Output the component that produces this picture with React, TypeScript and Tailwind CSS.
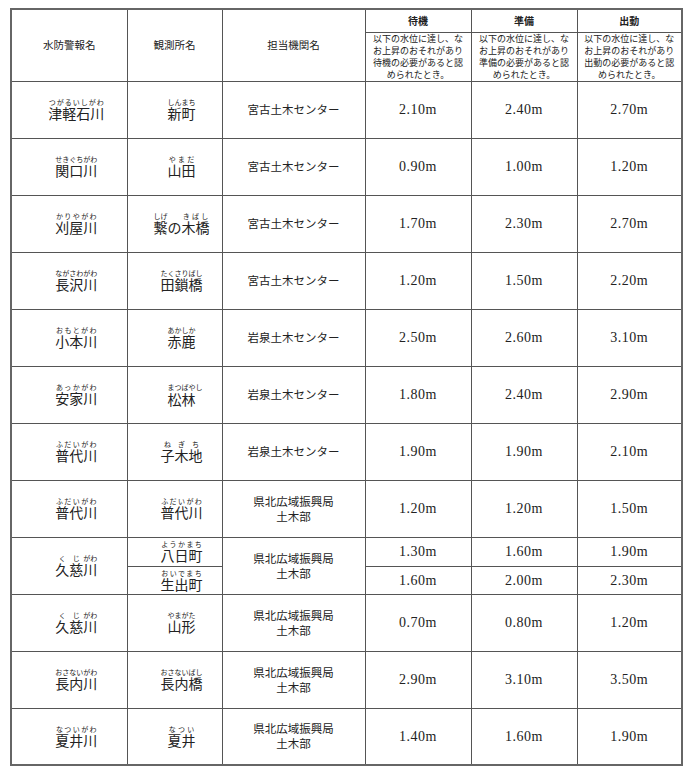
import React from "react";

type Seg = [string, string];

type Row = {
  river: Seg[];
  stations: Seg[][];
  office: string[];
  levels: string[][];
};

const MIYAKO = ["宮古土木センター"];
const IWAIZUMI = ["岩泉土木センター"];
const KENPOKU = ["県北広域振興局", "土木部"];

const ROWS: Row[] = [
  { river: [["津軽石川", "つがるいしがわ"]], stations: [[["新町", "しんまち"]]], office: MIYAKO, levels: [["2.10m", "2.40m", "2.70m"]] },
  { river: [["関口川", "せきぐちがわ"]], stations: [[["山田", "やまだ"]]], office: MIYAKO, levels: [["0.90m", "1.00m", "1.20m"]] },
  { river: [["刈屋川", "かりやがわ"]], stations: [[["繋", "しげ"], ["の", ""], ["木橋", "きばし"]]], office: MIYAKO, levels: [["1.70m", "2.30m", "2.70m"]] },
  { river: [["長沢川", "ながさわがわ"]], stations: [[["田鎖橋", "たくさりばし"]]], office: MIYAKO, levels: [["1.20m", "1.50m", "2.20m"]] },
  { river: [["小本川", "おもとがわ"]], stations: [[["赤鹿", "あかしか"]]], office: IWAIZUMI, levels: [["2.50m", "2.60m", "3.10m"]] },
  { river: [["安家川", "あっかがわ"]], stations: [[["松林", "まつばやし"]]], office: IWAIZUMI, levels: [["1.80m", "2.40m", "2.90m"]] },
  { river: [["普代川", "ふだいがわ"]], stations: [[["子", "ね"], ["木", "ぎ"], ["地", "ち"]]], office: IWAIZUMI, levels: [["1.90m", "1.90m", "2.10m"]] },
  { river: [["普代川", "ふだいがわ"]], stations: [[["普代川", "ふだいがわ"]]], office: KENPOKU, levels: [["1.20m", "1.20m", "1.50m"]] },
  {
    river: [["久", "く"], ["慈", "じ"], ["川", "がわ"]],
    stations: [[["八日町", "ようかまち"]], [["生出町", "おいでまち"]]],
    office: KENPOKU,
    levels: [["1.30m", "1.60m", "1.90m"], ["1.60m", "2.00m", "2.30m"]],
  },
  { river: [["久", "く"], ["慈", "じ"], ["川", "がわ"]], stations: [[["山形", "やまがた"]]], office: KENPOKU, levels: [["0.70m", "0.80m", "1.20m"]] },
  { river: [["長内川", "おさないがわ"]], stations: [[["長内橋", "おさないばし"]]], office: KENPOKU, levels: [["2.90m", "3.10m", "3.50m"]] },
  { river: [["夏井川", "なついがわ"]], stations: [[["夏井", "なつい"]]], office: KENPOKU, levels: [["1.40m", "1.60m", "1.90m"]] },
];

const DESC = [
  ["以下の水位に達し、な", "お上昇のおそれがあり", "待機の必要があると認", "められたとき。"],
  ["以下の水位に達し、な", "お上昇のおそれがあり", "準備の必要があると認", "められたとき。"],
  ["以下の水位に達し、な", "お上昇のおそれがあり", "出動の必要があると認", "められたとき。"],
];

const cell = "border border-[#555] text-center align-middle p-0";
const name = cell + " pl-[14px] text-[14px] leading-[16px]";
const num = cell + " font-['Liberation_Serif',serif] text-[14px] tracking-[0.5px]";

// readings wider than their base hang over to the right, as in the printed table
function Rubied({ segs }: { segs: Seg[] }) {
  return (
    <span>
      {segs.map(([base, reading], i) => {
        if (!reading) return <span key={i}>{base}</span>;
        const over = reading.length * 7 - base.length * 14;
        if (over > 0) {
          return (
            <span key={i} className="inline-flex flex-col items-start align-bottom">
              <span className="text-[7px] leading-[8px] whitespace-nowrap w-0 overflow-visible">{reading}</span>
              <span>{base}</span>
            </span>
          );
        }
        return (
          <ruby key={i}>
            {base}
            <rt className="text-[7px] leading-[8px]">{reading}</rt>
          </ruby>
        );
      })}
    </span>
  );
}

function Office({ lines }: { lines: string[] }) {
  return (
    <>
      {lines.map((l, i) => (
        <div key={i}>{l}</div>
      ))}
    </>
  );
}

export default function App() {
  return (
    <div className="min-h-[774px] bg-white pt-[8px] pl-[10px] font-['Noto_Sans_CJK_JP',sans-serif] text-[#222]">
      <table className="table-fixed border-collapse border-2 border-[#666]">
        <colgroup>
          <col className="w-[116px]" />
          <col className="w-[95px]" />
          <col className="w-[143px]" />
          <col className="w-[106px]" />
          <col className="w-[106px]" />
          <col className="w-[105px]" />
        </colgroup>
        <thead>
          <tr className="h-[23px]">
            <th rowSpan={2} className={cell + " text-[10.5px] font-normal"}>水防警報名</th>
            <th rowSpan={2} className={cell + " text-[10.5px] font-normal"}>観測所名</th>
            <th rowSpan={2} className={cell + " text-[10.5px] font-normal"}>担当機関名</th>
            <th className={cell + " text-[10px] font-bold"}>待機</th>
            <th className={cell + " text-[10px] font-bold"}>準備</th>
            <th className={cell + " text-[10px] font-bold"}>出動</th>
          </tr>
          <tr className="h-[49px]">
            {DESC.map((lines, i) => (
              <td key={i} className={cell + " text-[9px] leading-[12px]"}>
                {lines.map((l, j) => (
                  <div key={j} className="whitespace-nowrap">{l}</div>
                ))}
              </td>
            ))}
          </tr>
        </thead>
        <tbody>
          {ROWS.map((r, i) =>
            r.stations.length === 1 ? (
              <tr key={i} className="h-[57px]">
                <td className={name}><Rubied segs={r.river} /></td>
                <td className={name}><Rubied segs={r.stations[0]} /></td>
                <td className={cell + " text-[11.5px] leading-[15px]"}><Office lines={r.office} /></td>
                {r.levels[0].map((v, k) => (
                  <td key={k} className={num}>{v}</td>
                ))}
              </tr>
            ) : (
              <React.Fragment key={i}>
                <tr className="h-[29px]">
                  <td rowSpan={2} className={name}><Rubied segs={r.river} /></td>
                  <td className={name + " leading-[14px]"}><Rubied segs={r.stations[0]} /></td>
                  <td rowSpan={2} className={cell + " text-[11.5px] leading-[15px]"}><Office lines={r.office} /></td>
                  {r.levels[0].map((v, k) => (
                    <td key={k} className={num}>{v}</td>
                  ))}
                </tr>
                <tr className="h-[28px]">
                  <td className={name + " leading-[14px]"}><Rubied segs={r.stations[1]} /></td>
                  {r.levels[1].map((v, k) => (
                    <td key={k} className={num}>{v}</td>
                  ))}
                </tr>
              </React.Fragment>
            )
          )}
        </tbody>
      </table>
    </div>
  );
}
